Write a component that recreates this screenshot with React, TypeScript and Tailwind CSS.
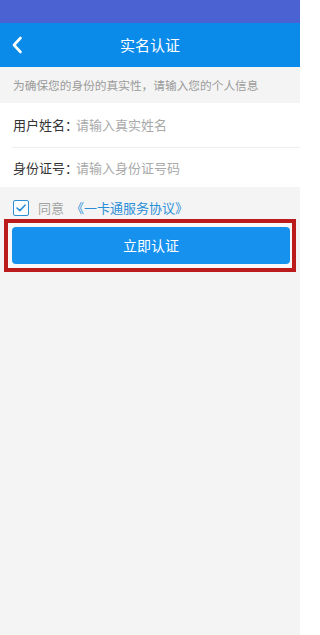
function BackIcon() {
  return (
    <svg width="12" height="18" viewBox="0 0 12 18" fill="none">
      <path d="M9.5 2 L3 9 L9.5 16" stroke="white" strokeWidth="2.6" strokeLinecap="round" strokeLinejoin="round" />
    </svg>
  );
}

function CheckBox() {
  return (
    <span className="flex h-[16px] w-[16px] items-center justify-center rounded-[2px] border-[1.5px] border-[#2b8fd8] bg-white">
      <svg width="10" height="8" viewBox="0 0 10 8" fill="none">
        <path d="M1 4 L3.8 6.6 L9 1.2" stroke="#2b8fd8" strokeWidth="1.6" strokeLinecap="round" strokeLinejoin="round" />
      </svg>
    </span>
  );
}

function FieldRow({ label, placeholder, className }: { label: string; placeholder: string; className?: string }) {
  return (
    <div className={"flex items-center whitespace-nowrap pl-[13px] " + (className ?? "")}>
      <span className="w-[63px] shrink-0 text-[13px] text-[#333]">{label}</span>
      <span className="text-[13px] text-[#a9a9a9]">{placeholder}</span>
    </div>
  );
}

export default function App() {
  return (
    <div
      className="flex h-[635px] w-[300px] flex-col bg-[#f4f4f4]"
      style={{ fontFamily: '"Noto Sans CJK SC", "Noto Sans", sans-serif' }}
    >
      <div className="h-[23px] bg-[#4a62d2]" />
      <div className="relative flex h-[44px] items-center justify-center bg-[#0b8be9]">
        <span className="absolute left-[11px] top-[13px]">
          <BackIcon />
        </span>
        <span className="text-[15px] text-white">实名认证</span>
      </div>

      <div className="flex h-[36px] items-center whitespace-nowrap px-[13px] text-[11.7px] text-[#9b9b9b]">
        为确保您的身份的真实性，请输入您的个人信息
      </div>

      <div className="bg-white">
        <FieldRow label="用户姓名：" placeholder="请输入真实姓名" className="h-[44px]" />
        <div className="ml-[12px] h-px bg-[#eeeeee]" />
        <FieldRow label="身份证号：" placeholder="请输入身份证号码" className="h-[39px]" />
      </div>

      <div className="mt-[13px] flex h-[16px] items-center whitespace-nowrap pl-[13px] text-[13px]">
        <CheckBox />
        <span className="ml-[9px] text-[#a3a3a3]">同意</span>
        <span className="ml-[7px] text-[#2b8fd8]">《一卡通服务协议》</span>
      </div>

      <div className="mx-[4px] mt-[3px] border-[4px] border-[#bb1b1b] bg-[#f8f8f8] pb-[4px] pl-[4px] pr-[2px] pt-[4px]">
        <button className="flex h-[37px] w-full items-center justify-center rounded-[4px] bg-[#1692ee] text-[14px] text-white">
          立即认证
        </button>
      </div>
    </div>
  );
}
